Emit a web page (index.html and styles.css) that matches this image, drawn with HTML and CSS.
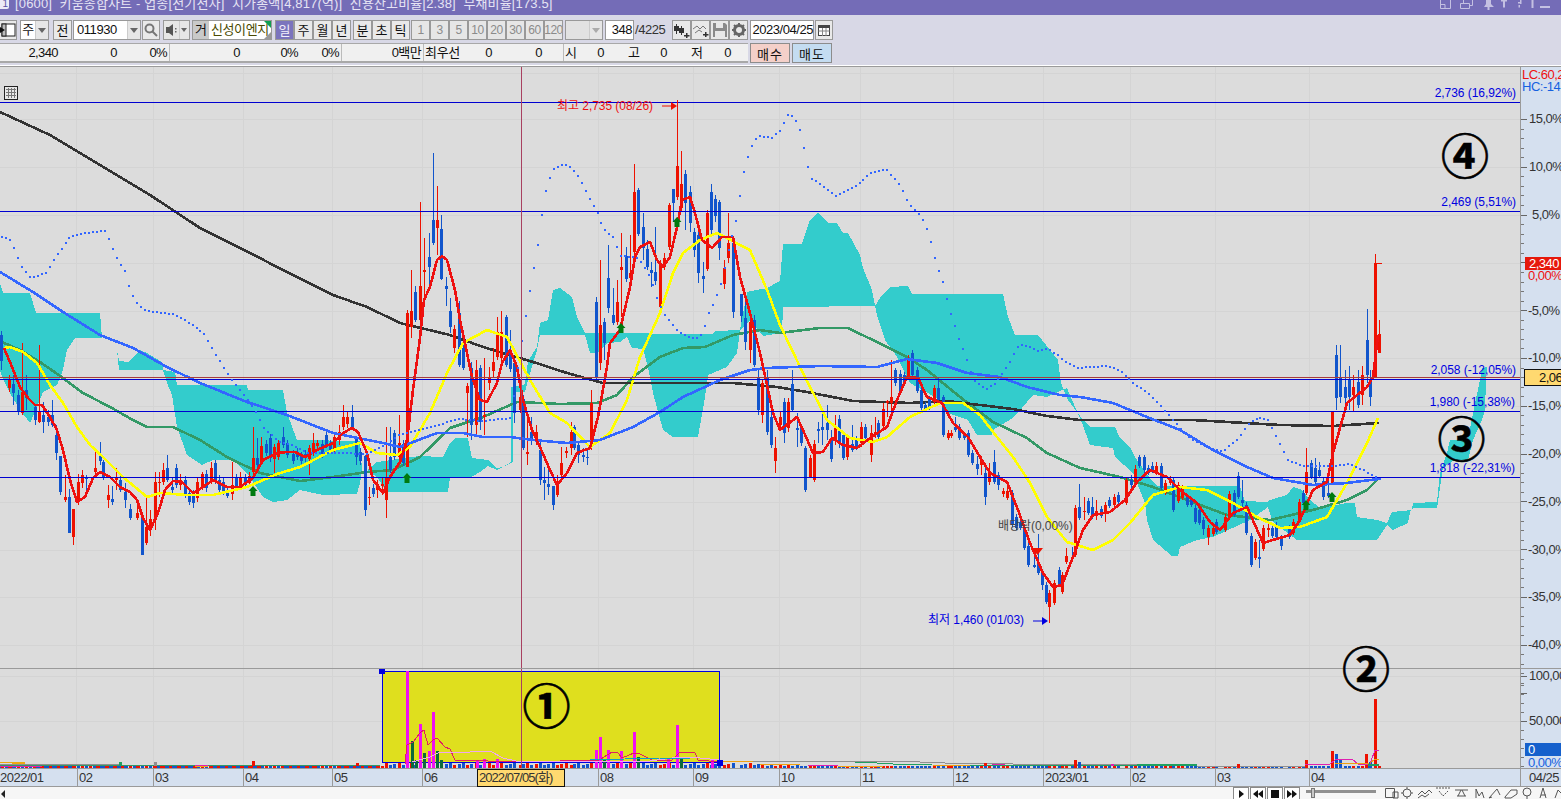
FILE: index.html
```html
<!DOCTYPE html>
<html lang="ko">
<head>
<meta charset="utf-8">
<title>키움종합차트</title>
<link rel="stylesheet" href="styles.css">
</head>
<body>
<div class="app">
  <header class="titlebar">
    <span class="win-no">1</span>
    <span class="title-text">[0600] &nbsp;키움종합차트 - 업종[전기전자] &nbsp;시가총액[4,817(억)] &nbsp;신용잔고비율[2.38] &nbsp;부채비율[173.5]</span>
    <svg class="win-ctrl" width="121" height="15" viewBox="0 0 121 15">
      <g fill="none" stroke="#c4c0e2" stroke-width="1">
        <path d="M0.5 0v8.500h10v-8.500M0.500 4.500h4.500v4"/>
        <path d="M20.500 3.500h9v5h-9zM23.500 3v-3M32.500 0v5.500h-3"/>
      </g>
      <path fill="#c4c0e2" d="M44 7l2-3v-4h5v4l3 3zM47.500 7h2v3h-2zM61 0h6v1.500h-2v6h-2v-6h-2z"/>
      <path fill="#c4c0e2" d="M78 2h2v1.500h-2zM80 0h1.500v4h-1.500zM78.500 5h1.500v2.500h-1.500z"/>
      <path stroke="#c4c0e2" d="M92.500 0v8M100 7h10" fill="none" stroke-width="2"/>
    </svg>
  </header>

  <section class="tools">
    <div class="row row-a">
      <button class="btn icon-btn"><svg width="16" height="16" viewBox="0 0 16 16"><rect x="2" y="2" width="13" height="12" fill="#fff" stroke="#222"/><rect x="2" y="2" width="4" height="12" fill="#bbb" stroke="#222"/><path d="M0 5l5 3-5 3z" fill="#111"/></svg></button>
      <div class="combo w-type"><span class="combo-text ctr">주</span><span class="arrow"></span></div>
      <button class="btn w19 gap-l4">전</button>
      <div class="combo w-code gap-l1"><span class="combo-text">011930</span><span class="arrow"></span></div>
      <button class="btn w18 gap-l1"><svg width="14" height="14" viewBox="0 0 14 14" fill="none" stroke="#777" stroke-width="2"><circle cx="5.500" cy="5.500" r="4"/><path d="M8.500 8.500l4.500 4.500"/></svg></button>
      <div class="combo w-sound gap-l3"><span class="speaker"><svg width="14" height="14" viewBox="0 0 14 14"><path d="M1 4h3l4-3v12l-4-3h-3z" fill="#555"/><path d="M10 5h1.500v1.500h-1.500zM10 8h1.500v1.500h-1.500z" fill="#666"/></svg></span><span class="arrow arrow-s"></span></div>
      <div class="stock gap-l2"><span class="stock-tag">거</span><span class="stock-name">신성이엔지</span><i class="corner-g"></i><i class="corner-s"></i></div>
      <div class="group gap-l3"><button class="btn w19 on">일</button><button class="btn w19">주</button><button class="btn w19">월</button><button class="btn w19">년</button></div>
      <div class="group gap-l2"><button class="btn w19">분</button><button class="btn w19">초</button><button class="btn w19">틱</button></div>
      <div class="group gap-l1"><button class="btn w19 dim">1</button><button class="btn w19 dim">3</button><button class="btn w19 dim">5</button><button class="btn w19 dim">10</button><button class="btn w19 dim">20</button><button class="btn w19 dim">30</button><button class="btn w19 dim">60</button><button class="btn w19 dim">120</button></div>
      <div class="combo w-blank gap-l2 combo-off"><span class="combo-text"></span><span class="arrow arrow-dim"></span></div>
      <span class="field w-count gap-l2">348</span>
      <span class="total">/4225</span>
      <div class="group gap-l5">
        <button class="btn w19"><svg width="16" height="16" viewBox="0 0 16 16"><path d="M2 2h1v2h2v5h-2v3h-1v-3h-2v-5h2zM7 4h1v2h2v5h-2v2h-1v-2h-2v-5h2z" fill="#333"/><path d="M12 11h1.500v2h2v1.500h-2v1.500h-1.500v-1.500h-2v-1.500h2z" fill="#333"/></svg></button>
        <button class="btn w19"><svg width="16" height="16" viewBox="0 0 16 16" fill="none" stroke="#777"><path d="M0 7l4-3 3 3 3-3 3 3M2 11l4-3 3 2"/><path d="M12 10h1.500v2h2v1.500h-2v1.500h-1.500v-1.500h-2v-1.500h2z" fill="#333" stroke="none"/></svg></button>
        <button class="btn w19"><svg width="16" height="16" viewBox="0 0 16 16"><path d="M1 1h12l2 2v12h-14z" fill="#8a8a8a"/><rect x="4" y="1" width="7" height="5" fill="#e8e8e8"/><rect x="3" y="9" width="10" height="6" fill="#e8e8e8"/></svg></button>
        <button class="btn w19"><svg width="16" height="16" viewBox="0 0 16 16"><circle cx="8" cy="8" r="4.500" fill="none" stroke="#666" stroke-width="3"/><path d="M8 1v3M8 12v3M1 8h3M12 8h3M3 3l2 2M11 11l2 2M13 3l-2 2M5 11l-2 2" stroke="#666" stroke-width="2"/></svg></button>
      </div>
      <span class="field w-date gap-l2">2023/04/25</span>
      <button class="btn w18 gap-l1"><svg width="14" height="14" viewBox="0 0 14 14"><rect x="1.500" y="2.500" width="11" height="10" fill="#fff" stroke="#444"/><rect x="1" y="2" width="12" height="3" fill="#444"/><path d="M1.500 8h11M5.500 5v8M9 5v8" stroke="#888"/></svg></button>
    </div>
    <div class="row row-b">
      <div class="quote">
        <span class="q q-58">2,340</span><span class="q q-59">0</span><span class="q q-51 sep-r">0%</span>
        <span class="q q-70">0</span><span class="q q-58">0%</span><span class="q q-41">0%</span>
        <span class="q q-82 sep-l">0백만</span>
        <span class="q-label sep-l">최우선</span><span class="q q-31">0</span><span class="q q-50">0</span>
        <span class="q-k sep-l k-si">시</span><span class="q q-28">0</span><span class="q-k k-go">고</span><span class="q q-27">0</span><span class="q-k k-go">저</span><span class="q q-28">0</span>
      </div>
      <button class="order buy">매수</button>
      <button class="order sell">매도</button>
    </div>
  </section>

  <main class="chart-wrap">
    <svg class="chart" id="chart" width="1561" height="721" viewBox="0 66 1561 721" xmlns="http://www.w3.org/2000/svg">
      <rect class="bg-plot" x="0" y="66" width="1520" height="703"/>
      <rect class="bg-axis" x="1520" y="66" width="41" height="703"/>
      <rect class="bg-axis" x="0" y="769" width="1561" height="18"/>
      <g id="grid" class="crisp"></g>
      <g id="cloud" class="crisp"></g>
      <g id="under" class="crisp"></g>
      <g id="candles" class="crisp"></g>
      <g id="lines" class="crisp"></g>

      <g class="crisp">
        <path class="hl" d="M0 102.500H1520M0 211.500H1520M0 379.500H1520M0 411.500H1520M0 477.500H1520"/>
        <path class="hl-red" d="M0 377.500H1520"/>
      </g>
      <g id="dots" class="crisp"></g>
      <g id="marks"></g>

      <g id="volume" class="crisp"></g>

      <rect class="vbox" x="382.500" y="671.500" width="337" height="91"/>
      <g id="volume-top" class="crisp"></g>
      <rect class="handle" x="379" y="669" width="6" height="5"/>
      <rect class="handle" x="717" y="760" width="6" height="6"/>

      <path class="cross" d="M521.500 66V769"/>
      <path class="frame" d="M0 66.500H1561M0 668.500H1561M0 768.500H1561M0 786.500H1561M1520.500 66V787"/>
      <path class="frame" d="M77.500 769V787M153.500 769V787M243.500 769V787M332.500 769V787M422.500 769V787M598.500 769V787M693.500 769V787M779.500 769V787M860.500 769V787M953.500 769V787M1043.500 769V787M1130.500 769V787M1215.500 769V787M1309.500 769V787"/>
      <g id="ticks" class="crisp"></g>

      <g class="table-icon crisp">
        <rect x="4.500" y="86.500" width="13" height="13" class="ti-box"/>
        <path class="ti-grid" d="M6 89.500H16M6 92.500H16M6 95.500H16M8.500 88V98M11.500 88V98M14.500 88V98"/>
      </g>

      <text class="lb c-red" x="557" y="110">최고 2,735 (08/26)</text>
      <text class="lb c-navy" x="928" y="624">최저 1,460 (01/03)</text>
      <text class="lb c-grey" x="998" y="530">배당락(0,00%)</text>
      <text class="lb c-navy end" x="1516" y="97">2,736 (16,92%)</text>
      <text class="lb c-navy end" x="1516" y="206">2,469 (5,51%)</text>
      <text class="lb c-navy end" x="1516" y="374">2,058 (-12,05%)</text>
      <text class="lb c-navy end" x="1515" y="406">1,980 (-15,38%)</text>
      <text class="lb c-navy end" x="1515" y="472">1,818 (-22,31%)</text>

      <text class="big" x="546.500" y="724">①</text>
      <text class="big" x="1366" y="687">②</text>
      <text class="big" x="1461.500" y="457">③</text>
      <text class="big" x="1465" y="174">④</text>

      <text class="ax c-hi" x="1522" y="79">LC:60,2</text>
      <text class="ax c-lo" x="1522" y="91">HC:-14</text>
      <text class="ax" x="1529" y="123">15,0%</text>
      <text class="ax" x="1529" y="171">10,0%</text>
      <text class="ax" x="1532" y="219">5,0%</text>
      <text class="ax" x="1528" y="315">-5,0%</text>
      <text class="ax" x="1528" y="362">-10,0%</text>
      <text class="ax" x="1528" y="410">-15,0%</text>
      <text class="ax" x="1528" y="458">-20,0%</text>
      <text class="ax" x="1528" y="506">-25,0%</text>
      <text class="ax" x="1528" y="554">-30,0%</text>
      <text class="ax" x="1528" y="601">-35,0%</text>
      <text class="ax" x="1528" y="649">-40,0%</text>
      <text class="ax" x="1529" y="680">100,00</text>
      <text class="ax" x="1529" y="725">50,000</text>

      <rect class="tag-red" x="1525" y="257" width="36" height="13"/>
      <text class="ax c-white" x="1529" y="268">2,340</text>
      <text class="ax c-hi" x="1528" y="280">0,00%</text>
      <rect class="tag-yel" x="1524.500" y="369.500" width="40" height="16"/>
      <text class="ax c-black" x="1539" y="382">2,06</text>
      <rect class="tag-blue" x="1525" y="743" width="36" height="13"/>
      <text class="ax c-white" x="1528" y="754">0</text>
      <text class="ax c-lo" x="1528" y="767">0,00%</text>

      <text class="ax" x="0" y="782">2022/01</text>
      <text class="ax" x="79" y="782">02</text>
      <text class="ax" x="155" y="782">03</text>
      <text class="ax" x="245" y="782">04</text>
      <text class="ax" x="334" y="782">05</text>
      <text class="ax" x="424" y="782">06</text>
      <text class="ax" x="600" y="782">08</text>
      <text class="ax" x="695" y="782">09</text>
      <text class="ax" x="781" y="782">10</text>
      <text class="ax" x="862" y="782">11</text>
      <text class="ax" x="955" y="782">12</text>
      <text class="ax" x="1045" y="782">2023/01</text>
      <text class="ax" x="1132" y="782">02</text>
      <text class="ax" x="1217" y="782">03</text>
      <text class="ax" x="1311" y="782">04</text>
      <text class="ax" x="1529" y="782">04/25</text>
      <rect class="tag-date" x="477.500" y="769.500" width="87" height="17"/>
      <text class="ax ax-date" x="479" y="782">2022/07/05(화)</text>
    </svg>
  </main>

  <footer class="status">
    <span class="scroll-arrow"></span>
    <div class="player">
      <button class="pbtn"><svg width="10" height="10" viewBox="0 0 10 10"><path d="M3 1l5 4-5 4z" fill="#111"/></svg></button>
      <button class="pbtn"><svg width="12" height="10" viewBox="0 0 12 10"><path d="M6 1l-5 4 5 4zM11 1l-5 4 5 4z" fill="#111"/></svg></button>
      <button class="pbtn"><svg width="10" height="10" viewBox="0 0 10 10"><rect x="1" y="1" width="8" height="8" fill="#111"/></svg></button>
      <button class="pbtn"><svg width="12" height="10" viewBox="0 0 12 10"><path d="M1 1l5 4-5 4zM6 1l5 4-5 4z" fill="#111"/></svg></button>
    </div>
    <div class="slider"><i class="slider-thumb"></i></div>
    <svg class="status-icons" width="178" height="12" viewBox="0 0 178 12" fill="none" stroke="#555">
      <path d="M2.500 1.500h9v9h-9zM10 5h5v6h-5z"/>
      <circle cx="24" cy="6" r="4"/><path d="M24 0v2M24 10v2M18 6h2M28 6h2"/>
      <path d="M35 8l4-4 3 3 4-4 3 3M35 11l4-3 3 2 4-3"/>
      <path d="M53 1h14M56 4l4 5 5-5" stroke-dasharray="2 1"/>
      <path d="M72 3h13M74 9h9M78 3l-3 6M79 3l3 6"/>
      <path d="M93 11V2l3 7 3-4 2 6"/>
      <path d="M106 11l8-9M106 11l3-1M114 2l3 6"/>
      <path d="M122 10l6-7h6v4l-6 4h-6z"/>
      <circle cx="144" cy="5" r="4"/><path d="M144 9v3"/>
      <path d="M157 11l3-10 3 10M158 8h5"/>
      <path d="M172 11l3-8 3 3"/>
    </svg>
  </footer>
</div>
<script src="chart.js"></script>
</body>
</html>
```

FILE: styles.css
```css
* { box-sizing: border-box; }
html, body { margin: 0; padding: 0; background: #f6f6f6; }
body { width: 1561px; height: 799px; overflow: hidden; font: 12px "Liberation Sans", "Noto Sans CJK KR", sans-serif; color: #111; }
.app { display: flex; flex-direction: column; width: 1561px; height: 799px; }

.titlebar { display: flex; align-items: flex-start; height: 15px; background: #746cb7; color: #e6e4f4; overflow: hidden; flex: none; }
.win-no { width: 9px; height: 10px; margin-top: -1px; background: #eceaf7; color: #5a52a5; font-size: 10px; line-height: 9px; text-align: right; padding-right: 1px; border-radius: 0 0 2px 0; flex: none; }
.title-text { margin: -5px 0 0 6px; font-size: 13px; line-height: 17px; letter-spacing: .15px; white-space: pre; }
.win-ctrl { margin-left: auto; flex: none; }

.tools { display: flex; flex-direction: column; flex: none; height: 51px; background: #d8d8e6; border-bottom: 1px solid #fff; padding-top: 5px; }
.row { display: flex; align-items: stretch; }
.row-a { height: 20px; }
.row-b { height: 20px; margin-top: 3px; }

button { font: inherit; color: inherit; margin: 0; padding: 0; }
.btn { display: flex; align-items: center; justify-content: center; height: 20px; background: #e9e9e9; border: 1px solid #999; font-size: 13px; color: #111; flex: none; overflow: hidden; line-height: 1; }
.icon-btn { width: 17px; justify-content: flex-end; border-left: 0; }
.w19 { width: 19px; }
.w18 { width: 18px; }
.on { background: #7b74bd; color: #f2f0fb; }
.dim { color: #8b8b8b; letter-spacing: -.5px; background: #e6e6e6; font-size: 12px; }
.group { display: flex; flex: none; }
.gap-l1 { margin-left: 1px; }
.gap-l2 { margin-left: 2px; }
.gap-l3 { margin-left: 3px; }
.gap-l4 { margin-left: 4px; }
.gap-l5 { margin-left: 5px; }

.combo { display: flex; height: 20px; border: 1px solid #999; background: #fff; flex: none; }
.combo-text { flex: 1; padding-left: 3px; line-height: 18px; font-size: 13px; letter-spacing: -.45px; }
.ctr { padding-left: 0; text-align: center; }
.arrow { position: relative; width: 13px; background: #e6e6e6; flex: none; border-left: 1px solid #ccc; }
.arrow::after { content: ""; position: absolute; left: 2px; top: 7px; border: 4px solid transparent; border-top: 5px solid #666; border-bottom: 0; }
.arrow-s { width: 10px; }
.arrow-s::after { left: 1px; border-left-width: 3px; border-right-width: 3px; border-top-width: 4px; }
.arrow-dim::after { border-top-color: #aaa; }
.w-type { width: 29px; margin-left: 3px; }
.w-code { width: 68px; }
.w-sound { width: 27px; background: #e6e6e6; }
.w-blank { width: 38px; }
.combo-off, .combo-off .combo-text { background: #e2e2e2; }
.speaker { flex: 1; display: flex; align-items: center; justify-content: center; }

.stock { position: relative; display: flex; width: 80px; height: 20px; background: #fff; border: 1px solid #999; flex: none; overflow: hidden; }
.stock-tag { width: 16px; background: #c9c9c9; text-align: center; line-height: 18px; font-size: 13px; }
.stock-name { padding-left: 2px; line-height: 18px; color: #4a4a00; font-size: 13px; letter-spacing: -.4px; white-space: nowrap; }
.corner-g { position: absolute; right: 0; top: 0; border-top: 7px solid #0fa050; border-left: 7px solid transparent; }
.corner-s { position: absolute; right: 0; bottom: 0; border-bottom: 7px solid #999; border-left: 7px solid transparent; }

.field { height: 20px; background: #fff; border: 1px solid #999; font-size: 13px; line-height: 18px; letter-spacing: -.45px; text-align: right; padding-right: 1px; flex: none; }
.w-count { width: 29px; }
.w-date { width: 64px; padding-right: 0; }
.total { width: 32px; margin-left: 1px; font-size: 13px; line-height: 20px; letter-spacing: -.45px; color: #333; flex: none; }

.quote { display: flex; width: 748px; height: 20px; background: #f0f0f0; border-top: 1px solid #a8a8a8; border-bottom: 2px solid #a8a8a8; line-height: 18px; flex: none; font-size: 13px; letter-spacing: -.6px; }
.q { text-align: right; flex: none; }
.q-58 { width: 58px; }
.q-59 { width: 59px; }
.q-51 { width: 53px; padding-right: 2px; }
.q-70 { width: 70px; }
.q-41 { width: 41px; padding-right: 0; margin-right: 2px; }
.q-82 { width: 82px; padding-right: 2px; }
.q-31 { width: 31px; }
.q-50 { width: 50px; }
.q-28 { width: 28px; }
.q-27 { width: 27px; }
.sep-r { border-right: 1px solid #bbb; }
.sep-l { border-left: 1px solid #bbb; }
.q-label { width: 38px; padding-left: 1px; letter-spacing: -.3px; flex: none; white-space: nowrap; }
.q-k { width: 12px; letter-spacing: 0; flex: none; }
.k-si { width: 13px; margin-left: 21px; padding-left: 1px; }
.k-go { width: 12px; margin-left: 24px; }

.order { width: 40px; height: 20px; margin-left: 2px; border: 1px solid #8c8c8c; font-size: 13px; letter-spacing: 1px; flex: none; }
.buy { background: #f4d0c9; }
.sell { background: #c4dcf1; }

.chart-wrap { flex: none; height: 721px; }
.chart { display: block; }
.bg-plot { fill: #dcdcdc; }
.bg-axis { fill: #d5e0ef; }
.crisp { shape-rendering: crispEdges; }
.hl { stroke: #0000d0; stroke-width: 1; fill: none; }
.hl-red { stroke: #a83c3c; stroke-width: 1; fill: none; }
.cross { stroke: #a84060; stroke-width: 1; fill: none; shape-rendering: crispEdges; }
.frame { stroke: #9a9a9a; stroke-width: 1; fill: none; shape-rendering: crispEdges; }
.vbox { fill: #dfdf1e; stroke: #0000e0; stroke-width: 1; shape-rendering: crispEdges; }
.handle { fill: #0000e0; }
.ti-box { fill: #e8e8e8; stroke: #222; }
.ti-grid { stroke: #777; fill: none; }
.tag-red { fill: #e6180c; }
.tag-blue { fill: #1560cc; }
.tag-yel { fill: #ffd970; stroke: #111; shape-rendering: crispEdges; }
.tag-date { fill: #ffd970; stroke: #111; shape-rendering: crispEdges; }

.lb, .ax { font: 12px "Liberation Sans", "Noto Sans CJK KR", sans-serif; letter-spacing: -.05px; }
.ax { font-size: 13px; letter-spacing: -.5px; fill: #333; }
.ax-date { letter-spacing: -.95px; }
.end { text-anchor: end; }
.c-red { fill: #ee1111; }
.c-navy { fill: #0000e0; }
.c-grey { fill: #444; }
.c-hi { fill: #ee1111; }
.c-lo { fill: #1560e0; }
.c-white { fill: #fff; }
.c-black { fill: #111; }
.big { font: 700 48px "Noto Sans CJK KR", sans-serif; fill: #000; stroke: #000; stroke-width: .6px; text-anchor: middle; }

.status { display: flex; align-items: flex-start; height: 12px; flex: none; overflow: hidden; background: #f6f6f6; }
.scroll-arrow { width: 0; height: 0; margin: 3px 0 0 1px; border: 4px solid transparent; border-right: 4px solid #222; border-left: 0; }
.player { display: flex; gap: 1px; margin-left: 1228px; flex: none; }
.pbtn { display: flex; align-items: center; justify-content: center; width: 16px; height: 14px; background: #fff; border: 1px solid #8a8a8a; }
.slider { position: relative; width: 70px; height: 3px; margin: 3px 0 0 6px; background: #909090; flex: none; }
.slider-thumb { position: absolute; left: 5px; top: -2px; width: 4px; height: 10px; background: #c8c8c8; border: 1px solid #777; }
.status-icons { margin-left: 7px; flex: none; }
```

FILE: chart.js
```js
const NS = 'http://www.w3.org/2000/svg';
const el = (parent, tag, attrs) => {
  const n = document.createElementNS(NS, tag);
  for (const k in attrs) n.setAttribute(k, attrs[k]);
  parent.appendChild(n);
  return n;
};
const $ = id => document.getElementById(id);
const pts = s => s.trim().split(/\s+/).map(p => p.split(',').map(Number));
const line = (g, s, color, w) => el(g, 'polyline', { points: s.trim(), fill: 'none', stroke: color, 'stroke-width': w, 'stroke-linejoin': 'round' });

/* grid */
const grid = $('grid');
[73,119,167,215,263,311,358,406,454,502,550,597,645,676,721].forEach(y =>
  el(grid, 'rect', { x: 0, y, width: 1520, height: 1, fill: '#d4d4d4' }));
[76,153,243,332,422,521,598,693,779,860,953,1043,1130,1215,1309].forEach(x =>
  el(grid, 'rect', { x, y: 67, width: 1, height: 701, fill: '#d4d4d4' }));

/* ichimoku cloud */
const clouds = [
 '0,283 3,293 30,293 36,313 100,313 102,338 83,338 75,338 67,350 63,370 57,385 43,392 37,407 30,423 20,410 10,393 2,377 0,370',
 '99,337 103,350 117,350 119,361 128,362 140,350 147,353 162,362 163,370 175,372 177,385 247,385 248,390 283,390 287,413 297,440 360,441 362,470 360,483 357,494 323,495 300,490 287,500 273,502 263,497 247,473 233,460 213,460 202,465 187,455 177,427 172,395 167,383 163,370 119,370 117,350 103,350',
 '367,470 377,462 419,456 443,457 450,443 455,438 468,438 472,458 488,460 497,468 503,467 511,462 511,387 523,385 525,383 528,361 537,347 540,323 548,320 553,290 560,288 572,297 577,317 585,333 712,334 715,331 740,330 747,292 767,288 780,281 783,244 802,244 810,220 818,213 828,223 837,223 843,233 848,233 860,255 863,268 872,290 875,306 783,307 782,333 763,336 750,320 740,331 737,353 727,367 708,375 705,397 698,437 673,437 663,430 653,393 648,367 643,349 632,348 627,337 620,342 607,343 597,353 590,353 585,335 540,335 537,350 528,380 525,392 513,392 513,462 511,463 497,470 488,466 480,472 470,478 450,478 448,492 387,492 377,477',
 '875,306 880,298 890,287 908,286 912,294 1003,294 1008,317 1015,335 1038,335 1058,360 1061,383 1068,400 1083,420 1090,427 1115,427 1120,438 1130,447 1135,457 1150,478 1157,486 1240,486 1245,501 1267,502 1270,500 1287,495 1293,487 1302,490 1310,500 1320,508 1347,503 1355,503 1357,517 1377,520 1387,523 1392,512 1412,510 1413,503 1437,502 1440,473 1447,453 1450,440 1468,439 1473,413 1480,380 1482,368 1487,367 1486,380 1485,410 1482,420 1473,440 1468,460 1455,460 1443,467 1437,508 1413,508 1410,512 1408,523 1393,530 1387,525 1377,540 1297,540 1273,522 1268,507 1250,520 1213,537 1197,540 1180,547 1178,556 1172,556 1153,540 1147,520 1145,503 1133,473 1115,457 1113,448 1090,445 1082,423 1067,388 1047,397 1033,395 1022,408 1013,418 993,430 992,435 977,435 968,420 947,413 940,400 910,383 897,357 885,340 877,315'
];
clouds.forEach(c => el($('cloud'), 'polygon', { points: c, fill: '#33cccc' }));

/* moving averages */
const GREEN = '2,342 20,350 40,362 63,378 83,393 110,407 133,420 147,427 173,427 200,440 227,457 260,473 300,481 333,477 367,472 393,470 420,457 450,428 483,417 517,402 560,404 597,403 617,395 633,377 660,357 683,348 705,347 733,335 760,330 780,333 820,328 848,328 883,345 907,357 927,370 960,397 993,422 1027,438 1047,453 1080,468 1120,477 1153,487 1187,500 1227,515 1270,520 1313,510 1347,500 1367,490 1379,478';
const BLACK = '0,112 50,135 100,165 150,195 200,228 250,253 283,270 333,295 367,307 400,323 450,335 483,347 533,362 567,373 603,383 693,383 733,383 777,387 807,392 853,401 910,403 947,401 980,405 1013,409 1047,416 1080,420 1193,420 1280,425 1333,426 1379,423';
const BLUE = '0,272 33,292 63,312 100,335 133,348 167,367 200,383 247,402 287,415 333,433 383,443 400,447 437,433 463,433 483,437 510,437 533,440 567,443 600,440 633,427 660,412 683,397 720,380 750,370 767,368 820,366 877,367 907,359 937,363 967,373 1000,377 1027,387 1060,395 1080,397 1113,403 1147,417 1180,430 1213,450 1247,467 1273,478 1313,485 1347,483 1379,479';
const YELLOW = '4,348 10,347 23,352 37,363 50,385 63,403 77,427 90,445 103,457 123,477 147,497 160,493 187,495 213,495 247,487 277,474 300,467 333,450 360,443 377,453 397,455 410,447 430,413 447,373 463,343 487,330 507,337 530,380 550,413 567,423 590,447 610,433 627,400 640,357 660,313 673,273 683,253 700,240 717,233 750,250 767,290 780,325 803,373 827,420 850,438 873,442 887,437 910,417 940,403 963,403 980,415 997,437 1013,457 1030,483 1047,517 1067,542 1093,550 1113,540 1130,523 1153,495 1180,487 1207,490 1233,503 1257,517 1280,528 1300,527 1327,517 1347,483 1367,443 1378,418';
const RED = '4,348 12,367 20,387 28,398 35,405 42,405 50,417 57,430 63,450 70,480 77,502 85,497 93,478 100,472 110,477 120,487 130,492 137,500 143,518 150,530 158,513 165,490 173,481 182,482 193,493 203,487 213,480 227,487 240,487 253,478 263,460 277,453 287,452 295,452 305,457 317,450 333,443 343,433 352,428 358,432 367,453 373,480 383,493 390,477 400,462 407,440 413,390 420,338 424,300 430,287 437,260 442,256 447,260 455,290 460,320 467,353 472,377 480,400 487,402 497,383 502,363 510,350 517,367 523,400 532,430 540,447 550,470 557,485 567,473 577,453 590,448 598,417 607,367 610,343 620,330 630,287 635,257 640,247 650,242 657,260 663,267 670,257 677,227 682,200 690,197 695,213 702,240 712,248 722,237 733,237 740,277 750,313 760,353 767,385 773,413 780,430 797,417 803,430 813,453 823,452 832,438 843,445 857,448 870,438 887,427 897,400 907,377 918,378 927,397 942,403 953,423 968,437 980,457 990,473 1007,482 1018,510 1030,543 1043,573 1053,587 1062,585 1073,557 1083,530 1093,515 1110,512 1125,500 1137,482 1150,470 1167,477 1180,490 1197,503 1210,522 1220,530 1233,513 1247,507 1263,543 1273,540 1290,535 1300,520 1313,490 1327,482 1333,453 1347,403 1367,387 1373,377 1378,335';
line($('under'), GREEN, '#339966', 2.6);
line($('under'), BLACK, '#333333', 2.6);
const lg = $('lines');
line(lg, YELLOW, '#ffff00', 2.6);
line(lg, BLUE, '#3366ff', 2.6);
line(lg, RED, '#ee1111', 2.6);

/* lagging span: one square per bar */
const DOTS = pts('0,235 10,240 20,265 30,277 45,272 55,255 70,235 85,232 105,230 115,255 125,272 128,285 133,298 142,309 160,312 173,313 190,323 203,332 215,353 227,373 240,390 253,407 263,427 277,440 293,445 307,452 340,452 367,453 383,445 400,433 420,428 440,423 458,418 483,420 510,417 522,333 527,303 531,277 536,252 540,220 544,193 548,179 553,168 562,163 570,167 578,177 587,195 597,213 603,228 613,237 620,255 638,257 650,277 655,295 663,313 677,330 690,337 698,337 703,328 707,313 712,303 720,282 728,247 733,230 737,213 741,183 745,163 750,148 754,139 758,135 771,137 780,129 788,112 797,122 801,136 805,159 810,177 818,182 835,195 855,185 870,172 885,168 900,185 908,203 920,215 925,225 929,237 933,254 938,270 942,281 947,303 951,317 955,328 959,342 964,353 968,366 972,378 977,383 985,388 995,382 1002,372 1010,360 1015,350 1019,343 1027,345 1037,350 1047,348 1058,355 1066,362 1077,367 1107,365 1120,370 1130,380 1147,392 1160,405 1173,420 1190,438 1207,447 1222,450 1237,438 1247,423 1257,417 1267,418 1277,438 1288,460 1303,465 1333,465 1347,463 1360,468 1379,478');
const dotsG = $('dots');
let di = 0;
for (let x = 1; x < 1380; x += 3.97) {
  while (di < DOTS.length - 2 && DOTS[di + 1][0] < x) di++;
  const [x0, y0] = DOTS[di], [x1, y1] = DOTS[di + 1];
  const y = y0 + (y1 - y0) * (x - x0) / (x1 - x0 || 1);
  el(dotsG, 'rect', { x: Math.round(x), y: Math.round(y), width: 2, height: 2, fill: '#3366ff' });
}

/* candles: x, wick top, wick bottom, body top, body bottom, colour */
const C = `1,331,370,335,361,b 9,375,392,380,388,r 13,375,405,384,393,b 18,390,415,395,412,b 22,343,415,392,413,r 26,375,410,390,398,b 35,405,425,407,420,b 39,345,423,412,422,r 43,402,433,415,422,b 48,410,426,417,422,b 52,400,427,415,425,b 56,425,460,435,453,b 60,456,495,456,492,b 65,475,502,497,500,r 69,489,533,497,533,b 73,509,545,509,537,r 78,474,505,482,500,r 82,470,488,475,483,r 86,475,492,477,479,b 95,449,475,468,472,r 100,442,465,454,461,b 103,460,480,462,478,b 108,485,508,495,500,r 112,486,505,499,502,b 116,468,490,478,480,r 120,475,492,480,490,b 125,483,508,492,500,b 130,504,520,509,518,b 137,500,520,513,518,r 142,515,555,518,555,b 146,498,545,527,543,r 150,510,536,519,530,r 155,472,530,482,520,r 159,472,497,482,483,r 163,463,485,470,482,r 167,455,482,468,480,b 172,477,495,487,490,b 176,464,488,468,485,b 180,474,490,480,485,r 185,476,498,480,494,b 189,490,505,493,502,b 193,490,508,495,503,b 197,478,502,482,498,r 202,472,490,474,487,r 206,470,492,474,488,b 211,462,484,468,481,r 215,460,484,463,480,b 219,475,493,480,490,b 223,478,495,482,492,b 227,486,498,490,496,b 232,462,500,485,494,r 236,474,490,477,487,b 240,472,490,477,487,r 245,474,488,477,485,b 249,472,487,476,483,r 253,427,478,458,472,r 257,438,468,458,465,b 261,437,465,446,462,r 266,440,456,444,453,b 270,434,462,438,458,b 274,444,473,447,459,r 278,440,460,443,457,r 283,427,448,437,445,b 287,440,458,443,455,b 293,450,464,454,461,b 297,448,460,452,457,b 301,452,464,455,461,b 305,450,462,454,458,b 309,445,475,448,459,r 313,433,456,443,453,r 317,440,450,443,446,r 322,440,458,444,454,b 326,432,448,435,445,b 330,440,453,443,450,b 334,432,452,437,450,r 339,425,445,432,440,r 343,405,430,417,427,r 347,412,428,417,424,r 352,405,430,417,427,b 356,436,465,438,457,b 360,448,465,452,461,b 365,455,516,456,510,b 369,487,505,497,498,r 373,484,497,488,494,b 377,480,498,484,490,r 382,477,495,484,486,r 386,427,518,478,500,r 390,427,473,457,470,b 394,430,460,433,457,b 399,415,460,443,457,r 403,440,466,444,463,b 407,310,467,313,467,r 411,270,338,311,327,r 415,286,322,292,320,b 420,202,327,286,320,r 424,238,300,270,272,r 429,233,290,257,267,b 433,153,245,220,243,b 437,186,255,220,228,r 441,215,280,229,279,b 446,277,306,286,289,b 450,298,333,311,327,b 454,325,353,329,348,r 459,301,367,313,365,b 463,340,370,348,368,b 467,383,437,386,393,r 471,362,440,368,425,b 476,360,435,370,425,r 480,365,430,368,422,b 484,358,435,415,417,r 489,367,390,378,383,r 493,348,378,362,371,r 497,317,360,332,357,r 501,311,363,332,358,r 506,315,367,317,365,b 510,330,372,352,369,b 514,360,423,363,413,b 520,383,413,397,410,r 523,395,450,399,448,b 527,420,465,452,454,r 531,417,445,432,439,b 536,425,445,432,440,r 540,440,485,450,480,b 544,467,500,480,483,b 548,470,495,484,487,b 553,486,510,486,505,b 557,475,497,485,495,r 561,447,480,463,475,r 566,447,458,451,453,r 571,422,455,432,448,r 574,425,450,427,448,b 578,443,463,445,455,b 583,448,462,455,457,b 587,448,465,457,458,b 591,390,450,403,447,r 596,297,380,302,378,b 600,260,370,325,363,r 604,318,360,322,343,b 608,245,313,278,308,b 613,288,325,315,323,b 617,280,325,302,322,r 621,233,317,267,270,r 626,247,282,256,279,b 630,235,285,273,278,r 634,164,255,192,252,r 638,188,236,190,234,b 643,213,260,227,248,b 647,240,270,249,267,b 651,262,287,270,273,b 655,227,285,272,281,b 660,260,313,263,307,r 664,253,270,258,267,r 669,203,250,205,247,r 673,189,222,189,203,b 677,100,200,166,197,r 681,151,212,184,208,r 685,170,230,174,203,b 690,186,232,192,223,b 694,228,257,232,250,b 698,232,283,235,273,b 703,262,293,276,279,b 707,210,271,213,269,r 711,184,235,192,230,b 715,195,222,199,216,b 719,200,260,202,248,b 724,260,289,268,284,r 728,213,263,243,258,r 733,240,318,243,312,b 741,294,322,294,316,b 745,300,350,318,342,b 750,318,363,322,350,r 754,315,367,320,365,b 758,368,415,377,410,b 762,380,423,383,415,r 767,370,435,377,432,b 771,412,448,417,445,b 775,437,473,448,461,r 780,412,428,417,425,r 784,398,443,402,433,b 788,398,432,402,428,r 792,370,412,384,410,b 797,413,447,428,430,b 801,424,446,427,443,b 805,446,492,448,490,b 810,455,478,458,477,r 814,440,482,444,480,r 818,422,443,429,431,b 822,413,445,427,430,b 827,405,440,423,430,b 831,430,462,438,459,b 835,415,445,427,439,r 839,415,448,419,444,b 843,432,460,435,458,b 847,434,460,437,457,r 852,425,452,444,450,b 856,436,450,439,446,b 861,422,447,427,443,r 865,424,440,427,438,b 871,425,462,433,455,r 875,417,438,432,434,r 878,420,440,423,437,b 883,403,428,409,426,r 887,400,417,401,403,r 891,360,417,397,403,r 895,368,386,370,383,b 900,370,394,374,392,b 904,372,385,375,383,b 908,355,380,358,377,r 912,350,378,353,375,b 917,367,393,370,391,b 921,388,410,390,408,b 925,402,412,405,410,b 929,396,410,399,408,b 934,385,404,388,402,r 938,378,402,388,400,b 943,395,437,397,435,b 948,430,440,433,438,r 951,430,438,433,436,r 955,417,432,427,430,b 959,424,440,427,438,b 964,432,440,435,438,b 968,430,457,433,455,b 972,450,465,453,463,b 977,456,475,464,469,b 981,456,475,460,465,r 985,463,505,473,497,b 989,463,485,472,482,r 994,450,484,462,482,b 998,472,490,475,485,b 1003,488,497,491,494,r 1007,483,500,491,498,r 1012,490,527,493,525,b 1016,514,530,517,528,b 1020,519,530,522,528,b 1024,526,550,529,548,b 1028,543,567,546,565,b 1034,553,568,565,567,b 1038,534,575,562,573,b 1042,570,590,573,585,b 1046,582,604,585,602,b 1049,590,623,593,607,r 1054,580,605,583,603,r 1059,567,586,570,584,b 1062,572,594,575,592,r 1066,548,564,556,562,r 1072,547,560,557,558,b 1075,505,557,508,555,r 1079,484,520,507,518,b 1084,497,520,511,512,r 1088,498,515,501,513,b 1092,497,519,507,517,b 1096,500,520,511,515,r 1101,506,518,509,516,b 1105,502,522,505,513,r 1109,497,508,500,506,b 1114,494,507,497,505,r 1118,492,504,495,502,b 1126,477,505,480,503,r 1131,475,488,480,485,b 1135,465,484,469,482,r 1139,455,468,457,466,b 1144,455,477,457,470,b 1148,465,475,468,473,b 1152,462,473,466,470,b 1156,462,475,466,473,r 1161,463,490,466,488,b 1165,480,495,483,493,r 1170,476,485,479,483,r 1173,477,512,480,510,b 1178,482,503,485,501,r 1182,485,500,488,498,r 1187,494,507,497,505,b 1191,497,507,500,505,b 1195,505,524,508,522,b 1199,507,525,510,523,b 1203,517,535,520,529,b 1208,525,545,528,537,r 1213,525,536,528,534,r 1216,519,534,522,532,b 1225,514,532,517,530,r 1229,491,519,494,517,r 1234,490,517,493,515,b 1238,472,499,476,497,b 1242,480,510,500,503,b 1246,502,535,505,533,b 1251,533,567,536,565,b 1255,539,560,542,558,r 1259,540,568,557,559,b 1263,525,551,528,549,r 1268,522,537,528,530,r 1272,525,538,528,536,b 1276,522,539,525,537,b 1281,535,550,538,546,b 1289,525,539,528,537,b 1293,519,535,522,533,r 1299,499,522,502,520,r 1303,490,505,493,503,b 1306,448,495,472,493,r 1311,460,479,463,477,b 1315,458,484,468,482,b 1319,462,478,470,476,b 1323,478,500,481,497,b 1328,476,498,493,496,b 1332,412,485,412,483,r 1336,345,410,355,398,b 1340,345,403,377,397,b 1345,370,412,387,398,b 1349,366,410,380,397,b 1353,375,412,387,395,r 1358,370,408,382,405,b 1362,366,405,375,395,r 1367,309,383,340,375,b 1370,370,406,380,397,b 1375,254,378,263,377,r 1379,320,353,334,353,r`;
const candleG = $('candles');
const COL = { r: '#ee1100', b: '#1155cc' };
const bars = C.trim().split(/\s+/).map(s => {
  const a = s.split(',');
  return { x: +a[0], hi: +a[1], lo: +a[2], top: +a[3], bot: +a[4], c: a[5] };
});
bars.forEach(b => {
  el(candleG, 'rect', { x: b.x, y: b.hi, width: 1, height: Math.max(1, b.lo - b.hi), fill: COL[b.c] });
  el(candleG, 'rect', { x: b.x - 1, y: b.top, width: 3, height: Math.max(1, b.bot - b.top), fill: COL[b.c] });
});
el(candleG, 'rect', { x: 1377, y: 263, width: 5, height: 1, fill: '#ee1100' });

/* signal marks */
const marks = $('marks');
[[253,486],[407,473],[621,323],[677,217],[1306,500],[1332,492]].forEach(([x, y]) =>
  el(marks, 'path', { d: `M${x} ${y}l4.500 5h-2v5h-5v-5h-2z`, fill: '#007a10' }));
el(marks, 'path', { d: 'M1032 548h11l-5.500 7z', fill: '#ee1100' });
el(marks, 'path', { d: 'M662 106h9', stroke: '#ee1100', fill: 'none', 'stroke-width': 1 });
el(marks, 'path', { d: 'M671 102l6 4-6 4z', fill: '#ee1100' });
el(marks, 'rect', { x: 677, y: 100, width: 1, height: 66, fill: '#ee1100' });
el(marks, 'path', { d: 'M1033 621h9', stroke: '#0000e0', fill: 'none', 'stroke-width': 1 });
el(marks, 'path', { d: 'M1042 617l6 4-6 4z', fill: '#0000e0' });

/* volume: one small bar per candle */
const vol = $('volume');
const vtop = $('volume-top');
const seg = (g, x1, x2, y, color) => el(g, 'rect', { x: x1, y, width: x2 - x1, height: 1, fill: color });
bars.forEach((b, i) => {
  const inBox = b.x > 382 && b.x < 800;
  const h = inBox ? (b.x < 760 ? 3 + (i * 7 % 3) : 2 + (i % 2)) : 2;
  el(vol, 'rect', { x: b.x - 1, y: 768 - h, width: 3, height: h, fill: COL[b.c] });
});
/* bar columns outside the digitised candles keep the dashed strip continuous */
for (let x = 1; x < 380; x += 4) el(vol, 'rect', { x, y: 766, width: 3, height: 2, fill: COL[x % 8 === 1 ? 'r' : 'b'] });
[[0,380,765,'#339966'],[0,42,766,'#e020b0'],[0,63,764,'#909090'],[42,120,764,'#909090'],[0,25,762,'#f0a810'],[12,25,763,'#f0a810'],[195,208,766,'#f0a810'],[195,208,765,'#e020b0'],
 [723,753,761,'#f0a010'],[753,920,761,'#909090'],[760,800,764,'#f0a010'],[808,838,765,'#e020b0'],[838,883,766,'#f0a010'],[855,877,762,'#20a060'],[877,893,763,'#20a060'],[893,932,764,'#20a060'],[920,945,762,'#909090'],[945,1013,763,'#909090'],[933,970,765,'#f0a010'],[970,1197,765,'#20a060'],[992,1005,764,'#e020b0'],[1013,1137,764,'#909090'],[1137,1197,764,'#20a060'],[1197,1305,766,'#909090']
].forEach(([a, b, y, c]) => seg(vol, a, b, y, c));
[[120,762,'#20a060'],[155,762,'#909090'],[253,761,'#ee1100'],[357,763,'#ee1100'],[985,763,'#ee1100'],[1075,760,'#ee1100'],[1079,762,'#1155cc'],[1112,764,'#e020b0']].forEach(([x, y, c]) =>
  el(vol, 'rect', { x: x - 1, y, width: 3, height: 766 - y, fill: c }));

/* volume spikes inside and after the selection box */
[[407,671],[420,724],[433,712],[429,751],[477,760],[484,759],[497,759],[596,750],[600,737],[608,750],[621,751],[634,732],[668,758],[677,725],[712,759]].forEach(([x, y]) =>
  el(vtop, 'rect', { x: x - 1, y, width: 3, height: 768 - y, fill: '#f010f0' }));
[[412,741],[416,760],[424,753],[437,751],[441,760],[604,760],[638,757],[681,757]].forEach(([x, y]) =>
  el(vtop, 'rect', { x: x - 1, y, width: 3, height: 768 - y, fill: '#0d6a3a' }));
[[1238,764],[1306,760],[1332,751],[1366,754],[1375,699]].forEach(([x, y]) =>
  el(vtop, 'rect', { x: x - 1, y, width: 3, height: 768 - y, fill: '#ee1100' }));
[[1336,754],[1340,759],[1370,762]].forEach(([x, y]) =>
  el(vtop, 'rect', { x: x - 1, y, width: 3, height: 768 - y, fill: '#1155cc' }));
line(vtop, '405,764 407,745 413,742 420,733 424,730 428,745 433,740 437,738 445,747 450,749 455,760 520,762 600,760 604,757 612,752 618,753 622,758 634,753 640,754 652,760 672,760 680,752 695,753 698,760 719,762', '#e02060', 1);
line(vtop, '412,762 430,757 440,752 470,752 490,751 503,758 516,761 600,761 650,761 680,757 700,758 719,760', '#f0a8f0', 1);
line(vtop, '590,760 660,758 690,759', '#10a0c0', 1);
line(vtop, '1305,764 1330,764 1335,760 1340,759 1352,759 1358,764 1370,764 1375,750 1379,750', '#e020b0', 1);
line(vtop, '1335,764 1370,763 1375,759 1379,759', '#f0a010', 1);
el(vtop, 'rect', { x: 1368, y: 764, width: 11, height: 2, fill: '#20a060' });

/* axis ticks */
const ticks = $('ticks');
for (let i = 0; i < 13; i++) {
  const major = 119 + i * 47.8;
  el(ticks, 'rect', { x: 1521, y: Math.round(major), width: 6, height: 1, fill: '#666' });
  if (i < 12) for (let j = 1; j < 5; j++)
    el(ticks, 'rect', { x: 1521, y: Math.round(major + j * 9.56), width: 3, height: 1, fill: '#777' });
}
[676,721].forEach(y => el(ticks, 'rect', { x: 1521, y, width: 6, height: 1, fill: '#666' }));
[685,694,703,712,730,739,748,757,766].forEach(y => el(ticks, 'rect', { x: 1521, y, width: 3, height: 1, fill: '#777' }));
```
